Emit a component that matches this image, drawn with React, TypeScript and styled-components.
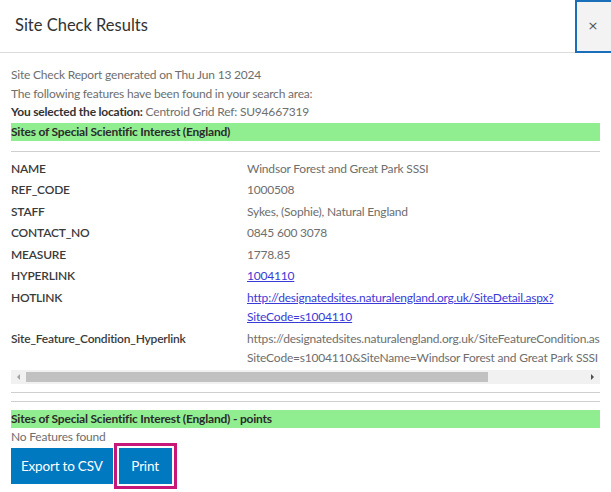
import React from 'react'
import styled, { createGlobalStyle } from 'styled-components'

const GlobalStyle = createGlobalStyle`
    html, body {
        margin: 0;
        padding: 0;
        background: #ffffff;
    }
    body {
        font-family: Lato, "Open Sans", "Liberation Sans", sans-serif;
        color: #6e6e6e;
    }
`

type Row = {
    label: string
    value: string
    link?: boolean
}

const rows: Row[] = [
    { label: 'NAME', value: 'Windsor Forest and Great Park SSSI' },
    { label: 'REF_CODE', value: '1000508' },
    { label: 'STAFF', value: 'Sykes, (Sophie), Natural England' },
    { label: 'CONTACT_NO', value: '0845 600 3078' },
    { label: 'MEASURE', value: '1778.85' },
    { label: 'HYPERLINK', value: '1004110', link: true },
    { label: 'HOTLINK', value: 'http://designatedsites.naturalengland.org.uk/SiteDetail.aspx?SiteCode=s1004110', link: true },
    {
        label: 'Site_Feature_Condition_Hyperlink',
        value: 'https://designatedsites.naturalengland.org.uk/SiteFeatureCondition.aspx?SiteCode=s1004110&SiteName=Windsor Forest and Great Park SSSI',
    },
]

const App = () => {
    return (
        <Dialog>
            <GlobalStyle />
            <Header>
                <Title>Site Check Results</Title>
                <CloseButton aria-label="Close">×</CloseButton>
            </Header>
            <Body>
                <Line>Site Check Report generated on Thu Jun 13 2024</Line>
                <Line>The following features have been found in your search area:</Line>
                <Line><strong>You selected the location:</strong> Centroid Grid Ref: SU94667319</Line>
                <SectionBar $top={1}>Sites of Special Scientific Interest (England)</SectionBar>
                <Divider $top={10} />
                <Viewport>
                    <Table>
                        <tbody>
                            {rows.map((r) => (
                                <tr key={r.label}>
                                    <Label>{r.label}</Label>
                                    <Value>{r.link ? <ValueLink href="#">{r.value}</ValueLink> : r.value}</Value>
                                </tr>
                            ))}
                        </tbody>
                    </Table>
                </Viewport>
                <ScrollBar>
                    <Arrow $dir="left" />
                    <Track>
                        <Thumb />
                    </Track>
                    <Arrow $dir="right" />
                </ScrollBar>
                <Divider $top={8} />
                <Divider $top={8} />
                <SectionBar $top={8}>Sites of Special Scientific Interest (England) - points</SectionBar>
                <Line>No Features found</Line>
                <Actions>
                    <Button>Export to CSV</Button>
                    <Button $focused>Print</Button>
                </Actions>
            </Body>
        </Dialog>
    )
}

const Dialog = styled.div`
    width: 611px;
    height: 492px;
    overflow: hidden;
    display: flex;
    flex-direction: column;
    background: #fff;
`
const Header = styled.div`
    display: flex;
    align-items: stretch;
    height: 52px;
    border-bottom: 1px solid #dcdcdc;
    flex-shrink: 0;
`
const Title = styled.h2`
    flex: 1;
    margin: 0;
    padding-left: 15px;
    font-size: 16.5px;
    font-weight: 400;
    line-height: 50px;
    color: #323232;
`
const CloseButton = styled.button`
    width: 44px;
    margin-right: -8px;
    margin-bottom: -1px;
    padding: 0 8px 3px 0;
    border: 2px solid #1a6fb8;
    background: #f3f3f3;
    color: #555;
    font-family: "DejaVu Sans", sans-serif;
    font-size: 13px;
    line-height: 1;
`
const Body = styled.div`
    padding: 13px 11px 0 11px;
    font-size: 12px;
    letter-spacing: -0.2px;
`
const Line = styled.div`
    line-height: 18.5px;
    color: #6e6e6e;
    strong {
        color: #323232;
        font-weight: 700;
    }
`
const SectionBar = styled.div<{ $top: number }>`
    margin-top: ${(p) => p.$top}px;
    height: 18px;
    line-height: 18px;
    background: #90ee90;
    color: #2b2b2b;
    font-weight: 700;
`
const Divider = styled.hr<{ $top: number }>`
    margin: ${(p) => p.$top}px 0 0 0;
    border: 0;
    border-top: 1px solid #cfcfcf;
`
const Viewport = styled.div`
    margin-top: 5px;
    overflow: hidden;
`
const Table = styled.table`
    border-spacing: 0 2px;
`
const Label = styled.td`
    width: 236px;
    min-width: 236px;
    padding: 0;
    vertical-align: top;
    line-height: 19.5px;
    color: #3a3a3a;
    font-weight: 600;
`
const Value = styled.td`
    padding: 0;
    vertical-align: top;
    line-height: 19.5px;
    color: #6e6e6e;
`
const ValueLink = styled.a`
    color: #3a3ad8;
    text-decoration: underline;
`
const ScrollBar = styled.div`
    display: flex;
    height: 14px;
    background: #f1f1f1;
`
const Arrow = styled.div<{ $dir: 'left' | 'right' }>`
    width: 15px;
    display: flex;
    align-items: center;
    justify-content: center;
    &::before {
        content: '';
        border-top: 3px solid transparent;
        border-bottom: 3px solid transparent;
        ${(p) => (p.$dir === 'left' ? 'border-right: 3px solid #a3a3a3;' : 'border-left: 3px solid #505050;')}
    }
`
const Track = styled.div`
    flex: 1;
    padding: 2px 0;
`
const Thumb = styled.div`
    width: 462px;
    height: 100%;
    background: #c1c1c1;
`
const Actions = styled.div`
    display: flex;
    gap: 6px;
    margin-top: 2px;
`
const Button = styled.button<{ $focused?: boolean }>`
    min-width: 53px;
    height: 36px;
    padding: 0 10px;
    border: 0;
    background: #0079c1;
    color: #fff;
    font-family: Lato, "Open Sans", "Liberation Sans", sans-serif;
    font-size: 13.5px;
    letter-spacing: -0.2px;
    outline: ${(p) => (p.$focused ? '3px solid #c7187a' : 'none')};
    outline-offset: 2px;
`

export default App
